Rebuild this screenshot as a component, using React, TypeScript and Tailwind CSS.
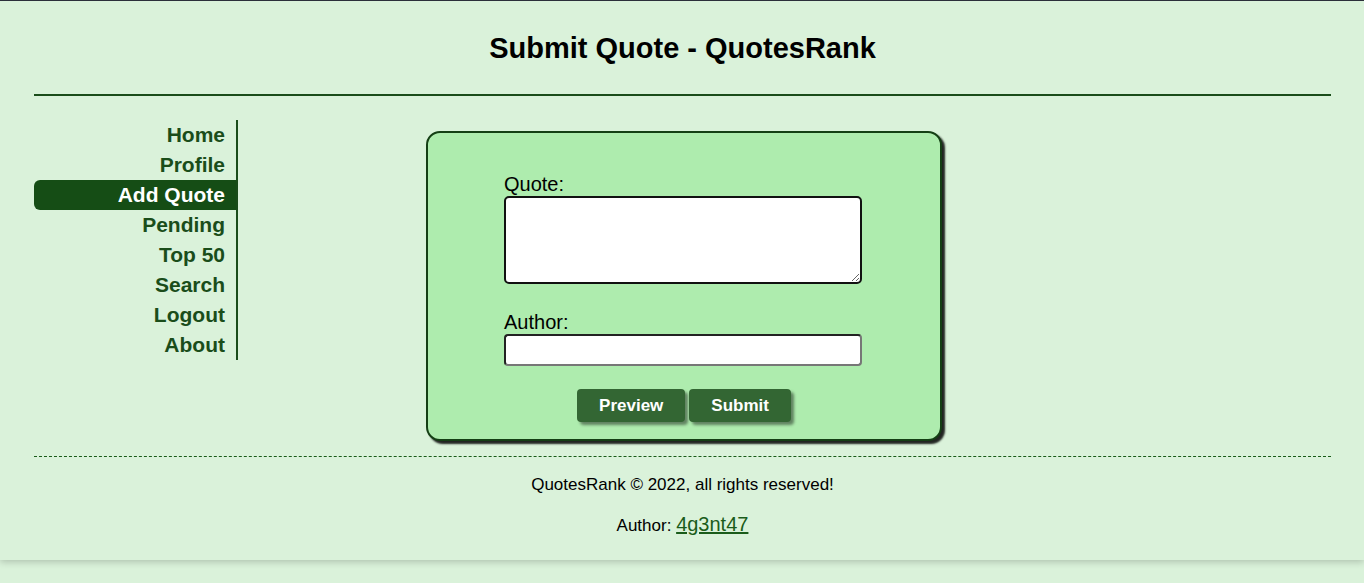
import React from 'react';

const navItems = ['Home', 'Profile', 'Add Quote', 'Pending', 'Top 50', 'Search', 'Logout', 'About'];

const App: React.FC = () => {
  return (
    <div className="min-h-[583px] bg-[#daf2da] font-['Liberation_Sans',Arial,sans-serif] text-black">
      <div className="border-t border-[#2b2f3a] bg-[#daf2da] pb-[20px] pl-[34px] pr-[33px] shadow-[0_2px_7px_rgba(0,0,0,0.2)]">
        <h1 className="pt-[31px] text-center text-[29px] font-bold leading-[32px]">
          Submit Quote - QuotesRank
        </h1>
        <hr className="mt-[30px] border-0 border-t-2 border-[#1a4d1a]" />

        <div className="flex items-start">
          <nav className="mt-[24px] flex w-[204px] shrink-0 flex-col border-r-2 border-[#1a4d1a] text-right">
            {navItems.map((item) => (
              <a
                key={item}
                href="#"
                className={
                  item === 'Add Quote'
                    ? 'rounded-l-md bg-[#154d15] pr-[11px] text-[21px] font-bold leading-[30px] text-white'
                    : 'pr-[11px] text-[21px] font-bold leading-[30px] text-[#1a4d1a]'
                }
              >
                {item}
              </a>
            ))}
          </nav>

          <form className="ml-[188px] mt-[35px] w-[516px] rounded-[14px] border-2 border-[#143f14] bg-[#aeecae] px-[76px] pb-[17px] pt-[39px] shadow-[3px_3px_2px_rgba(0,0,0,0.85)]">
            <label className="block text-[20px] leading-[24px]">Quote:</label>
            <textarea className="block h-[88px] w-[358px] resize-y rounded-[5px] border-2 border-[#111] bg-white" />
            <label className="mt-[26px] block text-[20px] leading-[24px]">Author:</label>
            <input
              type="text"
              className="block h-[32px] w-[358px] rounded-[4px] border-2 border-[#222] border-b-[#777] border-r-[#777] bg-white"
            />
            <div className="mt-[23px] flex justify-center gap-[4px]">
              <button
                type="button"
                className="h-[33px] rounded-[4px] bg-[#336633] px-[22px] text-[17px] font-bold text-white shadow-[3px_3px_3px_rgba(0,0,0,0.45)]"
              >
                Preview
              </button>
              <button
                type="button"
                className="h-[33px] rounded-[4px] bg-[#336633] px-[22px] text-[17px] font-bold text-white shadow-[3px_3px_3px_rgba(0,0,0,0.45)]"
              >
                Submit
              </button>
            </div>
          </form>
        </div>

        <div className="mt-[15px] border-t border-dashed border-[#1a5c1a]" />
        <footer className="text-center">
          <p className="mt-[16px] text-[17px] leading-[24px]">QuotesRank © 2022, all rights reserved!</p>
          <p className="mt-[13px] text-[17px] leading-[28px]">
            Author:{' '}
            <a href="#" className="text-[20px] text-[#1a5c1a] underline">
              4g3nt47
            </a>
          </p>
        </footer>
      </div>
    </div>
  );
};

export default App;
